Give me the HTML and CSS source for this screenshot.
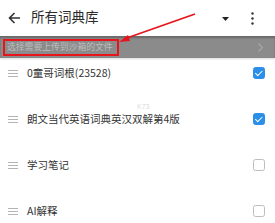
FILE: index.html
```html
<!DOCTYPE html>
<html lang="zh">
<head>
<meta charset="utf-8">
<link rel="stylesheet" href="styles.css">
</head>
<body>
<div class="app">
  <header class="topbar">
    <svg class="back" width="13" height="12" viewBox="0 0 13 12"><path d="M12 6H1.5M6.5 1L1.5 6l5 5" fill="none" stroke="#333" stroke-width="1.6"/></svg>
    <h1 class="title">所有词典库</h1>
    <div class="spacer"></div>
    <svg class="drop" width="7" height="4" viewBox="0 0 7 4"><path d="M0 0h7L3.5 4z" fill="#222"/></svg>
    <svg class="more" width="3" height="13" viewBox="0 0 3 13"><circle cx="1.5" cy="1.5" r="1.2" fill="#333"/><circle cx="1.5" cy="6.5" r="1.2" fill="#333"/><circle cx="1.5" cy="11.5" r="1.2" fill="#333"/></svg>
  </header>
  <ul class="list">
    <li class="row"><span class="grip"></span><span class="name">0童哥词根(23528)</span><span class="check on"></span></li>
    <li class="row"><span class="grip"></span><span class="name">朗文当代英语词典英汉双解第4版</span><span class="check on"></span></li>
    <li class="row"><span class="grip"></span><span class="name">学习笔记</span><span class="check"></span></li>
    <li class="row"><span class="grip"></span><span class="name">AI解释</span><span class="check"></span></li>
  </ul>
  <div class="hint">
    <span class="hint-text">选择需要上传到沙箱的文件</span>
    <svg class="chev" width="5" height="9" viewBox="0 0 5 9"><path d="M0.5 0.5l4 4-4 4" fill="none" stroke="#a8a8a8" stroke-width="1.1"/></svg>
  </div>
  <div class="watermark">K73</div>
  <svg class="annot" width="275" height="223" viewBox="0 0 275 223">
    <rect x="4" y="40" width="114" height="15" fill="none" stroke="#e8141b" stroke-width="2"/>
    <path d="M124 39L195 14" stroke="#e8141b" stroke-width="1.8" fill="none"/>
    <path d="M119 42L128 35L130 41z" fill="#e8141b"/>
  </svg>
</div>
</body>
</html>
```
FILE: styles.css
```css
* { box-sizing: border-box; margin: 0; padding: 0; }
html, body { width: 275px; height: 223px; overflow: hidden; background: #fff; }
body { font-family: "Noto Sans CJK SC", "Noto Sans", sans-serif; color: #333; }
.app { position: relative; width: 275px; height: 223px; overflow: hidden; }
.topbar { height: 36px; display: flex; align-items: center; padding: 0 21px 0 8px; }
.back { display: block; margin-top: -1px; }
.title { font-size: 13.5px; font-weight: 400; margin-left: 10px; color: #2a2a2a; line-height: 1; margin-top: -2px; }
.spacer { flex: 1; }
.drop { display: block; margin-right: 22px; margin-top: 1px; }
.more { display: block; }
.list { list-style: none; padding-top: 14px; }
.row { height: 46px; display: flex; align-items: center; padding: 0 10px 0 8px; }
.grip { width: 10px; height: 7px; border-top: 1px solid #b4b4b4; border-bottom: 1px solid #b4b4b4; position: relative; margin-top: 1px; }
.grip::after { content: ""; position: absolute; left: 0; right: 0; top: 2px; height: 1px; background: #b4b4b4; }
.name { margin-left: 9px; font-size: 10.5px; color: #333; flex: 1; line-height: 1; }
.check { width: 12px; height: 12px; border: 1.2px solid #bdbdbd; border-radius: 2.5px; position: relative; }
.check.on { background: #2b8fea; border-color: #2b8fea; }
.check.on::after { content: ""; position: absolute; left: 3.2px; top: 1.2px; width: 3px; height: 5.5px; border: solid #fff; border-width: 0 1.6px 1.6px 0; transform: rotate(45deg); }
.hint { position: absolute; left: 0; top: 36px; width: 275px; height: 22px; background: #8b8b8b; box-shadow: inset 0 2px 2px rgba(0,0,0,0.25), 0 1px 2px rgba(0,0,0,0.15); display: flex; align-items: center; padding: 0 12px 0 7px; }
.hint-text { flex: 1; font-size: 8.8px; color: #bdbdbd; line-height: 1; }
.chev { display: block; }
.watermark { position: absolute; left: 137px; top: 103px; font-size: 7px; color: #dcdcdc; font-family: "Liberation Sans", sans-serif; }
.annot { position: absolute; left: 0; top: 0; pointer-events: none; }
```
